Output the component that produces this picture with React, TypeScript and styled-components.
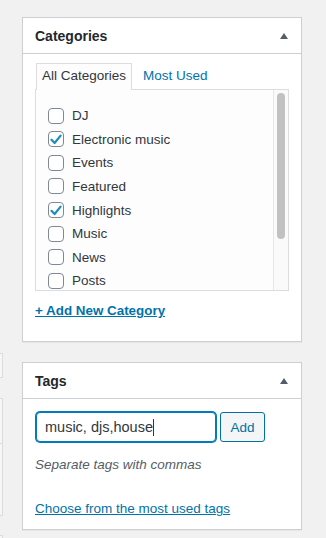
import React from "react";
import styled, { createGlobalStyle } from "styled-components";

const Global = createGlobalStyle`
  html, body { margin: 0; padding: 0; background: #f1f1f1; }
  body { font-family: "Liberation Sans", Arial, sans-serif; color: #32373c; font-size: 13.5px; }
  * { box-sizing: border-box; }
`;

const Page = styled.div`
  display: flex;
  align-items: flex-start;
  width: 326px;
  height: 538px;
  overflow: hidden;
`;

const LeftStrip = styled.div`
  width: 3px;
  display: flex;
  flex-direction: column;
  padding-top: 353px;
`;

const StubBox = styled.div<{ $h: number; $gap: number }>`
  height: ${(p) => p.$h}px;
  margin-bottom: ${(p) => p.$gap}px;
  border: 1px solid #dcdcde;
  border-left: none;
  background: #f6f6f6;
`;

const Sidebar = styled.div`
  margin-left: 19px;
  width: 280px;
  padding-top: 17px;
  display: flex;
  flex-direction: column;
  gap: 20px;
`;

const Postbox = styled.section`
  background: #fff;
  border: 1px solid #ccd0d4;
  box-shadow: 0 1px 1px rgba(0, 0, 0, 0.04);
`;

const Header = styled.div`
  display: flex;
  align-items: center;
  justify-content: space-between;
  height: 36px;
  padding: 0 13px 0 12px;
  border-bottom: 1px solid #ccd0d4;
`;

const Title = styled.h2`
  margin: 0;
  font-size: 14px;
  font-weight: 700;
  line-height: 20px;
  color: #23282d;
`;

const Toggle = styled.svg`
  display: block;
  width: 8px;
  height: 6px;
`;

const Inside = styled.div`
  padding: 0 12px 12px;
`;

const Tabs = styled.ul`
  display: flex;
  list-style: none;
  margin: 9px 0 -1px;
  padding: 0;
  position: relative;
  z-index: 1;
`;

const Tab = styled.li<{ $active?: boolean }>`
  height: 27px;
  line-height: 24px;
  padding: 0 5px;
  margin-left: ${(p) => (p.$active ? "1px" : "0")};
  margin-right: ${(p) => (p.$active ? "5px" : "0")};
  font-size: 13.5px;
  color: ${(p) => (p.$active ? "#32373c" : "#0073aa")};
  background: ${(p) => (p.$active ? "#fdfdfd" : "transparent")};
  border: 1px solid ${(p) => (p.$active ? "#dddddd" : "transparent")};
  border-bottom: none;
`;

const TabPanel = styled.div`
  display: flex;
  height: 202px;
  border: 1px solid #dddddd;
  background: #fdfdfd;
`;

const Checklist = styled.ul`
  flex: 1;
  list-style: none;
  margin: 0;
  padding: 14px 0 0 12px;
  overflow: hidden;
`;

const Item = styled.li`
  display: flex;
  align-items: center;
  height: 23.57px;
  gap: 8px;
  font-size: 13.5px;
  color: #32373c;
`;

const Box = styled.span`
  width: 16px;
  height: 16px;
  flex: none;
  border: 1px solid #7e8993;
  border-radius: 4px;
  background: #fff;
  display: flex;
  align-items: center;
  justify-content: center;
`;

const Track = styled.div`
  width: 15px;
  flex: none;
  border-left: 1px solid #e6e6e6;
  background: #fafafa;
  padding: 3px 0 0 3px;
`;

const Thumb = styled.div`
  width: 8px;
  height: 146px;
  border-radius: 4px;
  background: #c1c1c1;
`;

const AddLink = styled.a`
  display: block;
  margin: 11px 0 9px;
  line-height: 18px;
  font-size: 13.4px;
  font-weight: 700;
  color: #0073aa;
  text-decoration: underline;
`;

const TagRow = styled.div`
  display: flex;
  gap: 4px;
  margin-top: 13px;
`;

const TagInput = styled.div`
  width: 180px;
  height: 30px;
  border: 1px solid #007cba;
  box-shadow: 0 0 0 1px #007cba;
  border-radius: 4px;
  background: #fff;
  display: flex;
  align-items: center;
  padding: 0 8px;
  font-size: 14.5px;
  color: #32373c;
  margin-left: 1px;
`;

const Caret = styled.span`
  display: inline-block;
  width: 1px;
  height: 17px;
  background: #32373c;
`;

const AddButton = styled.button`
  width: 45px;
  height: 30px;
  padding: 0;
  border: 1px solid #0071a1;
  border-radius: 3px;
  background: #f3f5f6;
  color: #0071a1;
  font-family: inherit;
  font-size: 13.5px;
`;

const Howto = styled.p`
  margin: 14px 0 0;
  line-height: 18px;
  font-size: 13.5px;
  font-style: italic;
  color: #555d66;
`;

const TagCloudLink = styled.a`
  display: block;
  margin: 26px 0 -1px;
  line-height: 18px;
  font-size: 13.5px;
  color: #0073aa;
  text-decoration: underline;
`;

const Check = () => (
  <svg width="12" height="11" viewBox="0 0 12 11">
    <path d="M1.5 5.8 L4.6 9 L10.6 1.6" fill="none" stroke="#1e8cbe" strokeWidth="2.2" strokeLinecap="round" strokeLinejoin="round" />
  </svg>
);

const Arrow = () => (
  <Toggle viewBox="0 0 8 6">
    <polygon points="4,0 8,6 0,6" fill="#555d66" />
  </Toggle>
);

const categories = [
  { name: "DJ", checked: false },
  { name: "Electronic music", checked: true },
  { name: "Events", checked: false },
  { name: "Featured", checked: false },
  { name: "Highlights", checked: true },
  { name: "Music", checked: false },
  { name: "News", checked: false },
  { name: "Posts", checked: false },
];

export default function App() {
  return (
    <>
      <Global />
      <Page>
        <LeftStrip>
          <StubBox $h={25} $gap={20} />
          <StubBox $h={46} $gap={-1} />
          <StubBox $h={73} $gap={19} />
          <StubBox $h={40} $gap={0} />
        </LeftStrip>
        <Sidebar>
          <Postbox>
            <Header>
              <Title>Categories</Title>
              <Arrow />
            </Header>
            <Inside>
              <Tabs>
                <Tab $active>All Categories</Tab>
                <Tab>Most Used</Tab>
              </Tabs>
              <TabPanel>
                <Checklist>
                  {categories.map((c) => (
                    <Item key={c.name}>
                      <Box>{c.checked && <Check />}</Box>
                      {c.name}
                    </Item>
                  ))}
                </Checklist>
                <Track>
                  <Thumb />
                </Track>
              </TabPanel>
              <AddLink href="#">+ Add New Category</AddLink>
            </Inside>
          </Postbox>
          <Postbox>
            <Header>
              <Title>Tags</Title>
              <Arrow />
            </Header>
            <Inside>
              <TagRow>
                <TagInput>
                  music, djs,house
                  <Caret />
                </TagInput>
                <AddButton>Add</AddButton>
              </TagRow>
              <Howto>Separate tags with commas</Howto>
              <TagCloudLink href="#">Choose from the most used tags</TagCloudLink>
            </Inside>
          </Postbox>
        </Sidebar>
      </Page>
    </>
  );
}
